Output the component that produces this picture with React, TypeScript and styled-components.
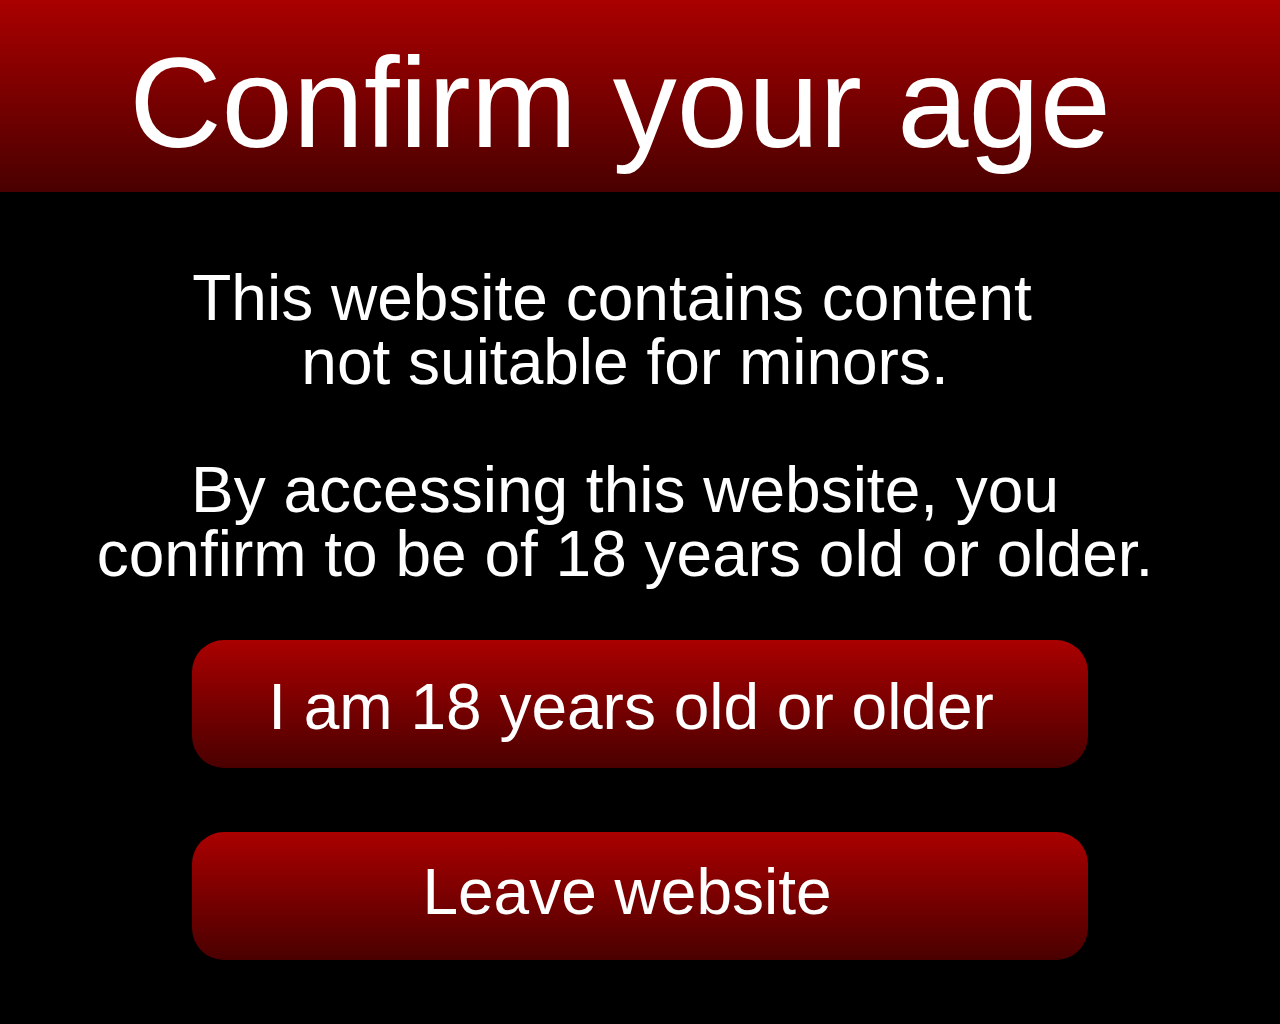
import styled, { createGlobalStyle } from "styled-components";

const GlobalStyle = createGlobalStyle`
    html, body {
        margin: 0;
        padding: 0;
        background: #000;
    }
    body {
        font-family: "Liberation Sans", Arial, sans-serif;
        color: #fff;
    }
`;

const Page = styled.div`
    width: 1280px;
    height: 1024px;
    display: flex;
    flex-direction: column;
    align-items: center;
    background: #000;
`;

const Header = styled.header`
    width: 100%;
    height: 192px;
    display: flex;
    align-items: flex-start;
    justify-content: center;
    background: linear-gradient(to bottom, #aa0000, #4a0000);
`;

const Title = styled.h1`
    margin: 14px 0 0;
    padding-right: 40px;
    font-size: 128px;
    font-weight: 400;
    line-height: 178px;
`;

const Notice = styled.p`
    margin: 74px 0 54px;
    padding-right: 30px;
    font-size: 64px;
    line-height: 64px;
    text-align: center;
`;

const LeadLine = styled.span`
    padding-right: 26px;
`;

const Actions = styled.div`
    display: flex;
    flex-direction: column;
    gap: 64px;
`;

const Button = styled.button<{ $shiftX: number; $shiftY: number }>`
    width: 896px;
    height: 128px;
    border: none;
    border-radius: 32px;
    padding: ${(p) => Math.max(p.$shiftY, 0) * 2}px ${(p) => p.$shiftX * 2}px
        ${(p) => Math.max(-p.$shiftY, 0) * 2}px 0;
    background: linear-gradient(to bottom, #aa0000, #4a0000);
    color: #fff;
    font-family: "Liberation Sans", Arial, sans-serif;
    font-size: 64px;
    cursor: pointer;
`;

const App = () => {
    return (
        <>
            <GlobalStyle />
            <Page>
                <Header>
                    <Title>Confirm your age</Title>
                </Header>
                <Notice>
                    <LeadLine>This website contains content</LeadLine>
                    <br />
                    not suitable for minors.
                    <br />
                    <br />
                    By accessing this website, you
                    <br />
                    confirm to be of 18 years old or older.
                </Notice>
                <Actions>
                    <Button $shiftX={9} $shiftY={3}>
                        I am 18 years old or older
                    </Button>
                    <Button $shiftX={13} $shiftY={-4}>
                        Leave website
                    </Button>
                </Actions>
            </Page>
        </>
    );
};

export default App;
